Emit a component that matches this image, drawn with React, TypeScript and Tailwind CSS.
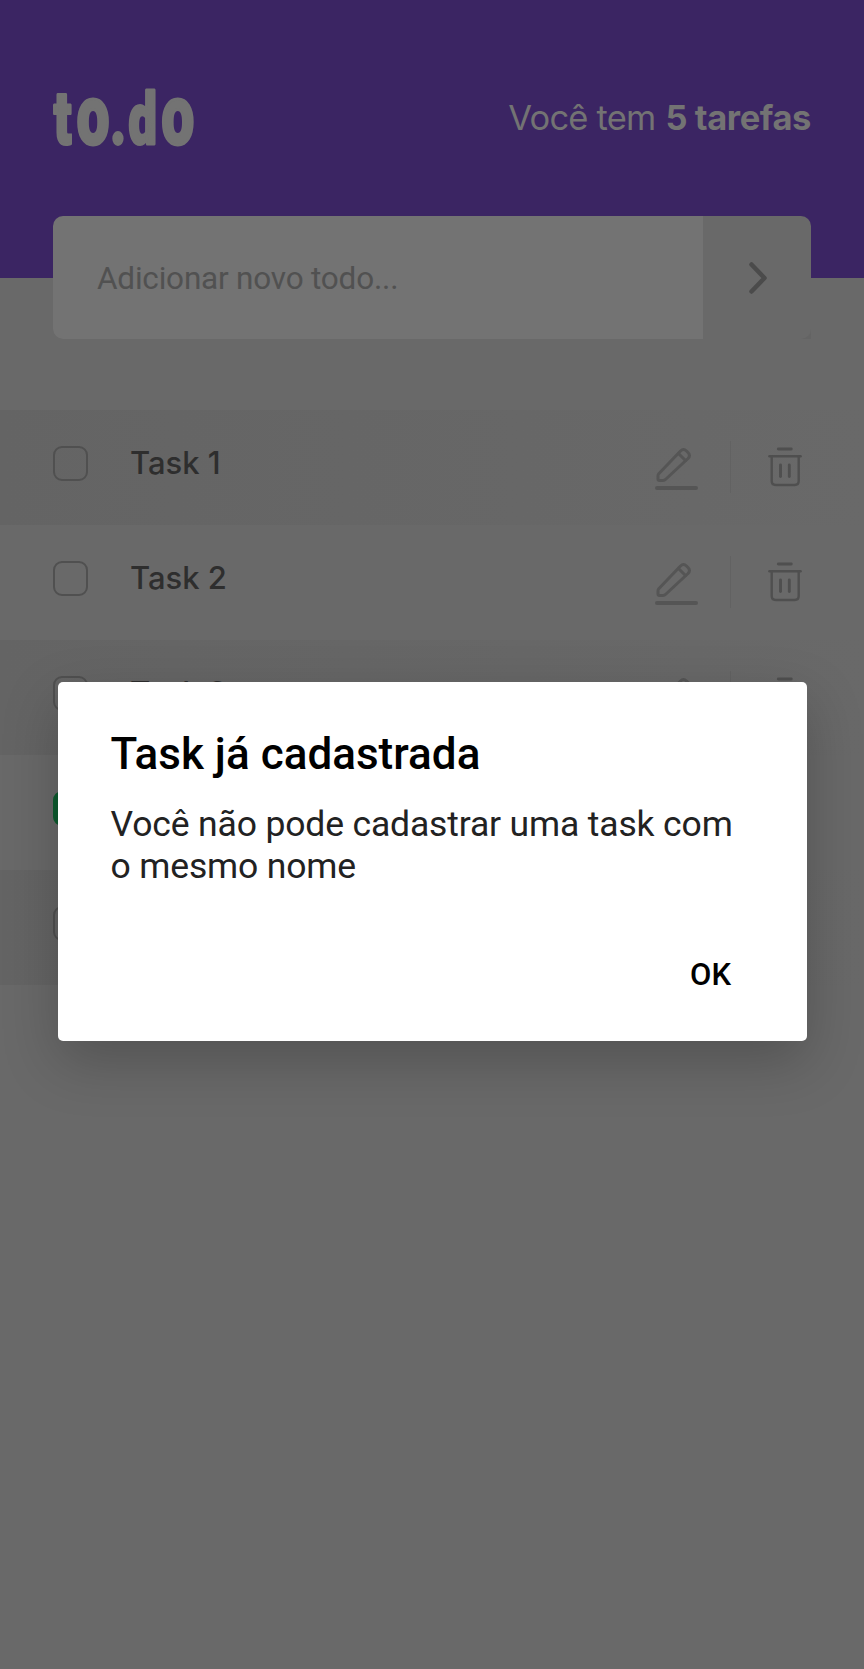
type Task = { name: string; done: boolean };

const tasks: Task[] = [
  { name: 'Task 1', done: false },
  { name: 'Task 2', done: false },
  { name: 'Task 3', done: false },
  { name: 'Task 4', done: true },
  { name: 'Task 5', done: false },
];

function Logo() {
  return (
    <svg width="142" height="60" viewBox="0 0 142 60" className="mt-[88px] block overflow-visible" aria-label="to.do">
      <text
        x="1 34 82 108 155"
        y="55.5"
        transform="scale(0.7 1)"
        fill="#737373"
        stroke="#737373"
        strokeWidth="3"
        strokeLinejoin="round"
        className="font-['Roboto',sans-serif] text-[83px] font-black"
      >
        <tspan className="text-[74px]">t</tspan>o<tspan className="text-[72px]">.</tspan><tspan className="text-[72px]">d</tspan>o
      </text>
    </svg>
  );
}

function PencilIcon() {
  return (
    <svg width="44" height="44" viewBox="0 0 44 44" fill="none" stroke="#555555" strokeWidth="3" strokeLinejoin="round" strokeLinecap="round">
      <path d="M4.500 28 L26.500 5 Q29.500 2 32.500 5 L34 6.500 Q37 9.500 34 12.500 L12 33 Q10.500 34.500 9 34.500 H5.500 Q4 34.500 4 33 V30 Q4 28.500 4.500 28 Z" />
      <path d="M24.500 7.500 L31.500 14.500" />
      <path d="M3 42 H42" strokeWidth="4" />
    </svg>
  );
}

function TrashIcon() {
  return (
    <svg width="34" height="40" viewBox="0 0 34 40" fill="none" stroke="#4f4f4f" strokeWidth="2.4" strokeLinecap="round">
      <path d="M10.300 2 H23.300" strokeWidth="2.800" />
      <path d="M1.400 9.300 H32.600" />
      <path d="M3.700 9.300 V34 Q3.700 38 7.700 38 H26.700 Q30.700 38 30.700 34 V9.300" />
      <path d="M12.500 18 V29.500" strokeWidth="2.900" />
      <path d="M21.300 18 V29.500" strokeWidth="2.900" />
    </svg>
  );
}

function TaskRow({ task, index }: { task: Task; index: number }) {
  return (
    <li
      className={
        'flex h-[115.1px] items-start pl-[53px] ' +
        (index % 2 === 0 ? 'bg-linear-to-r from-[#646464] to-[#696969]' : 'bg-[#696969]')
      }
    >
      <div
        className={
          'mt-9 size-[35px] shrink-0 rounded-[9px] border-2 ' +
          (task.done ? 'border-[#0d5b2e] bg-[#0d5b2e]' : 'border-[#505050]')
        }
      />
      <span className="ml-[42px] mt-[33px] flex-1 font-['Inter',sans-serif] text-[31px] leading-10 font-medium text-[#2e2e2e]">
        {task.name}
      </span>
      <div className="mt-[35.500px] w-[76px]">
        <PencilIcon />
      </div>
      <div className="mt-[31px] h-[52px] w-px bg-[#626262]" />
      <div className="mt-[37px] mr-[62.500px] ml-[36.500px]">
        <TrashIcon />
      </div>
    </li>
  );
}

export default function App() {
  return (
    <div className="relative h-[1669px] w-[864px] overflow-hidden bg-[#696969]">
      <header className="flex h-[277.500px] items-start justify-between bg-[#3b2563] pr-[53px] pl-[53px]">
        <Logo />
        <p className="mt-[96px] font-['Inter',sans-serif] text-[34.500px] leading-[44px] whitespace-pre text-[#737373]">
          <span className="font-normal tracking-[-0.8px]">Você tem </span><b className="ml-px font-bold tracking-[-0.4px]">5 tarefas</b>
        </p>
      </header>

      <div className="relative mx-[53px] -mt-[61.500px] flex h-[123px] rounded-t-[10px] rounded-bl-[10px] bg-linear-to-b from-transparent from-50% to-[#646464] to-50%">
        <div className="flex w-[650px] items-center rounded-l-[10px] bg-[#737373] pt-[2px] pl-11 font-['Roboto',sans-serif] text-[31.500px] tracking-[-0.2px] text-[#515151]">
          Adicionar novo todo...
        </div>
        <div className="flex flex-1 items-center justify-center rounded-r-[10px] bg-[#696969] pl-[2px]">
          <svg width="18" height="32" viewBox="0 0 18 32" fill="none" stroke="#4b4b4b" strokeWidth="4.500" strokeLinecap="round" strokeLinejoin="round">
            <path d="M2.500 2.500 L15.500 16 L2.500 29.500" />
          </svg>
        </div>
      </div>

      <ul className="mt-[71px]">
        {tasks.map((task, index) => (
          <TaskRow key={task.name} task={task} index={index} />
        ))}
      </ul>

      <div
        role="dialog"
        className="absolute top-[681.500px] left-[57.500px] flex h-[359px] w-[749px] flex-col rounded-[5px] bg-white px-[53px] pt-[46px] font-['Roboto',sans-serif] shadow-[0_20px_56px_rgba(0,0,0,0.22)]"
      >
        <h1 className="text-[44px] leading-[52px] font-medium tracking-[0.03px] text-black">Task já cadastrada</h1>
        <p className="mt-[23px] text-[35.500px] leading-[42px] tracking-[-0.15px] whitespace-nowrap text-[#222222]">
          Você não pode cadastrar uma task com
          <br />o mesmo nome
        </p>
        <button className="mt-[68px] mr-[22.500px] self-end text-[31px] leading-[40px] font-medium text-black">OK</button>
      </div>
    </div>
  );
}
